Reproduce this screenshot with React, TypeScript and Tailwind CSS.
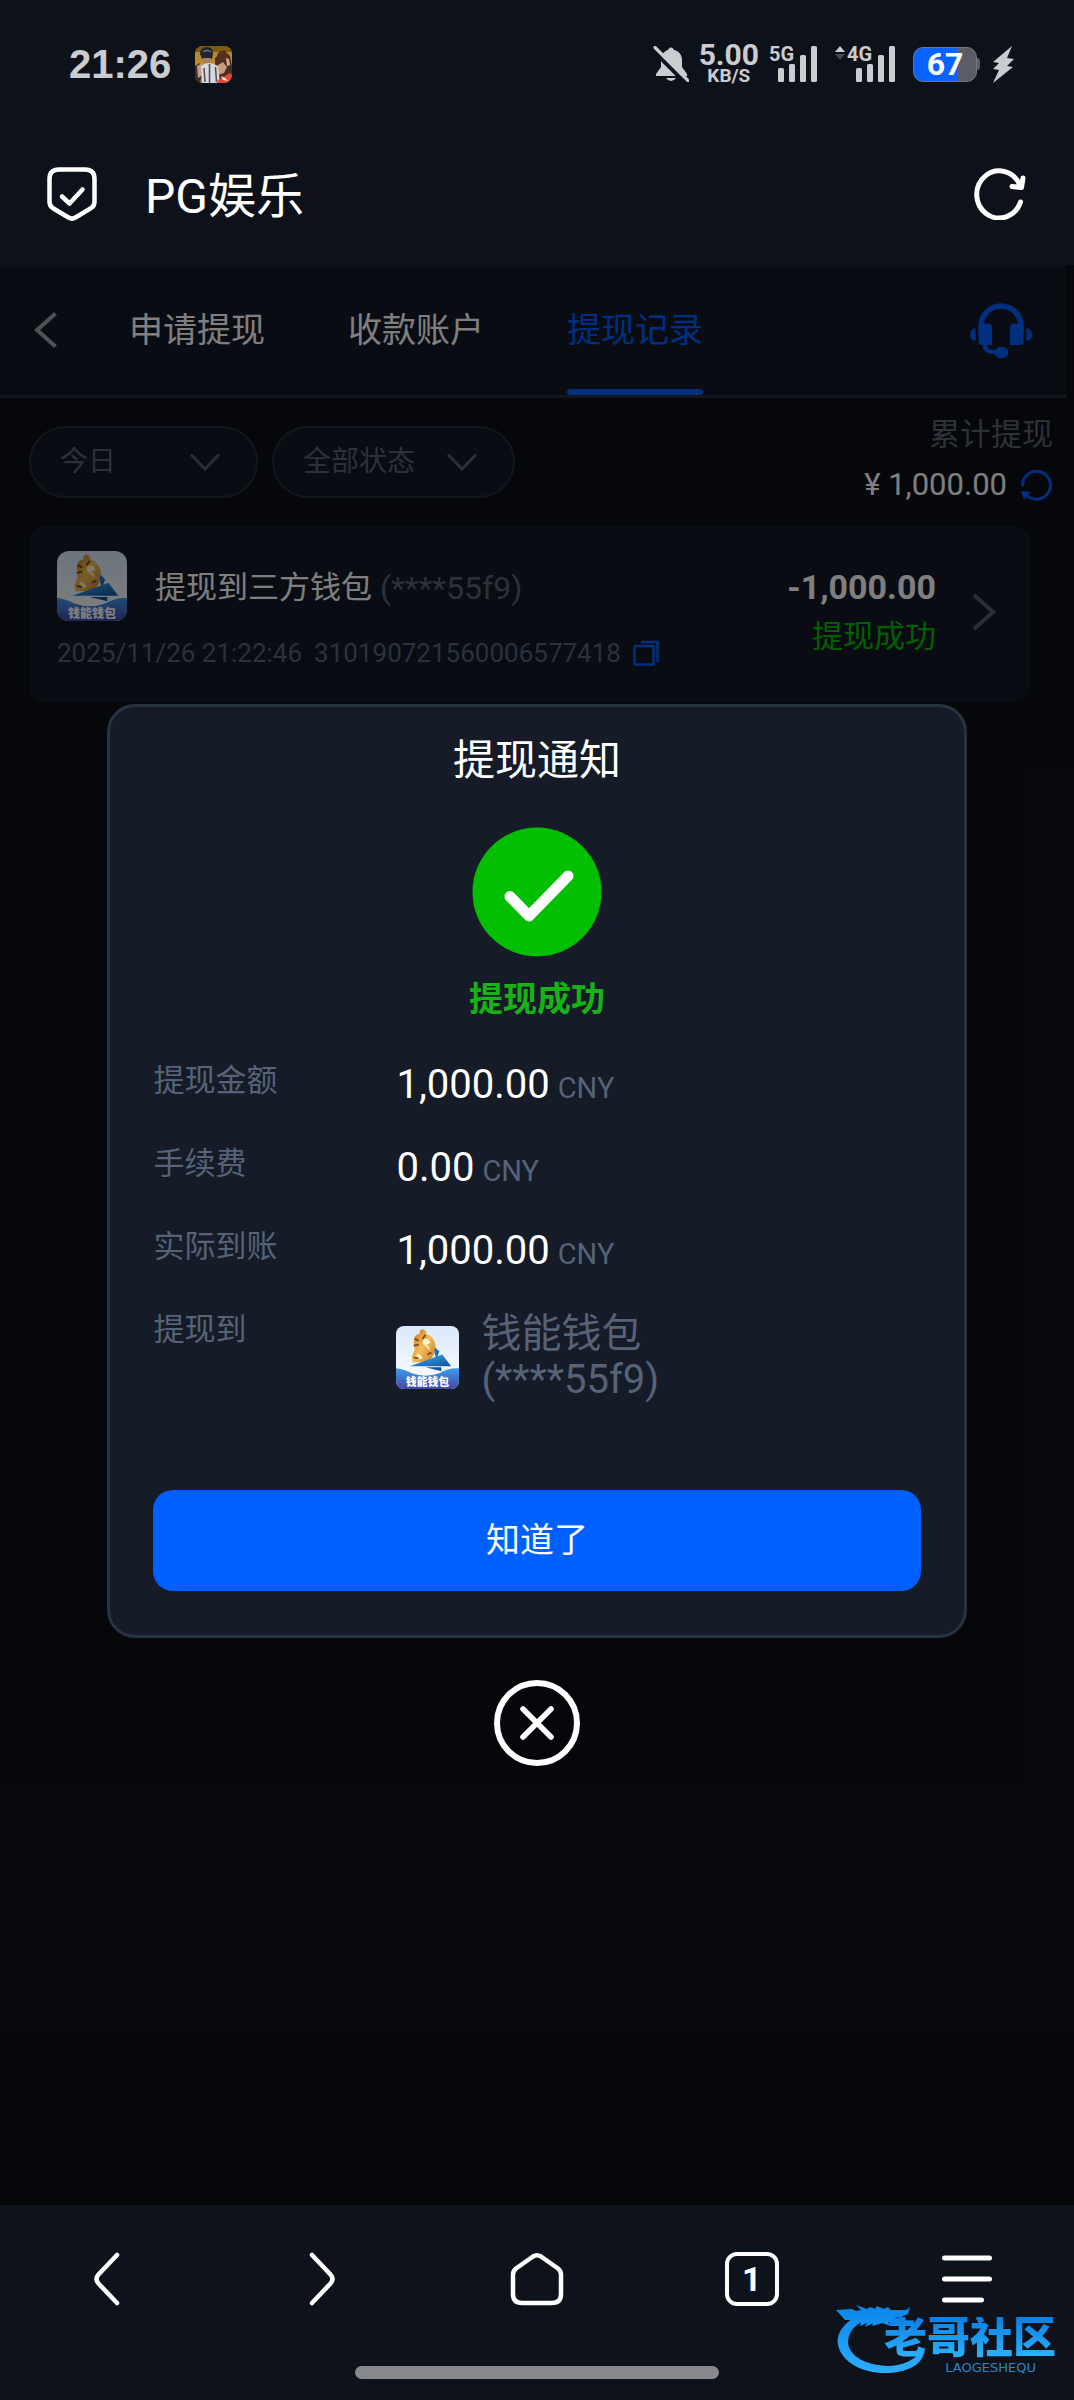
import React from "react";

const detailRows = [
  { label: "提现金额", value: "1,000.00", unit: "CNY" },
  { label: "手续费", value: "0.00", unit: "CNY" },
  { label: "实际到账", value: "1,000.00", unit: "CNY" },
];

function GameIcon() {
  return (
    <svg viewBox="0 0 37 37" className="size-[37px] rounded-lg" aria-hidden="true">
      <rect width="37" height="37" fill="#b98a2c" />
      <path d="M0 0h37v6H0z" fill="#7d5a12" />
      <path d="M20 12l9-8 6 6 2 10v17H20z" fill="#4a2f22" />
      <circle cx="27" cy="10" r="5" fill="#5b2f1e" />
      <path d="M23 19l5-3 4 5-3 6-6 2z" fill="#c99b7c" />
      <path d="M31 12l3 1 1 6-3 1z" fill="#d5ae8e" />
      <path d="M0 20l5-3 3 8-3 12H0z" fill="#3a2c28" />
      <path d="M2 20l5-3 1 12-5 3z" fill="#c99d84" />
      <path d="M6 20q7-6 17 0l2 17H7z" fill="#d6d8db" />
      <path d="M14.500 18v19M9 22l1 14M20.500 21l1 15" stroke="#4b4d52" strokeWidth="1.500" />
      <path d="M5 8q0-7 7-7 6 0 6 7l-1 5H7z" fill="#20242c" />
      <path d="M8 6q4-3 8 0" stroke="#6d7684" strokeWidth="1.500" fill="none" />
      <path d="M8 12h8l-1 5H9z" fill="#a87d62" />
      <path d="M23 34l12-7 2 2v8H22z" fill="#e5483b" />
      <path d="M26 30l4 2 3 3-5-1z" fill="#ffe9e4" />
    </svg>
  );
}

function MutedBell() {
  return (
    <svg viewBox="0 0 36 36" className="size-9" aria-hidden="true">
      <path
        d="M18 1.500c1.500 0 2.500 1 2.600 2.200C26 5 29 9 29 14v7l5 7v2H3v-2l5-7v-7c0-5 3-9 7.400-10.300C15.600 2.500 16.500 1.500 18 1.500z"
        fill="#cbccd0"
      />
      <path d="M13 32h10q-2 3-5 3t-5-3z" fill="#cbccd0" />
      <path d="M0 4.500l33 33" stroke="#0d1119" strokeWidth="4" />
      <path d="M2 1.500l33 33" stroke="#cbccd0" strokeWidth="3.200" strokeLinecap="round" />
    </svg>
  );
}

function SignalBars({ label, arrows = false }: { label: string; arrows?: boolean }) {
  return (
    <div className="relative h-9 w-12">
      <span className="absolute left-0 top-0 text-[20px] font-bold leading-4">{label}</span>
      {arrows && (
        <svg viewBox="0 0 10 14" className="absolute -left-3 top-0 h-3.5 w-2.5" aria-hidden="true">
          <path d="M5 0l5 6H0z" fill="#cbccd0" />
          <path d="M5 14l5-6H0z" fill="#44474e" />
        </svg>
      )}
      <svg viewBox="0 0 48 36" className="absolute inset-0 size-full" aria-hidden="true">
        <g fill="#cbccd0">
          <rect x="9" y="22" width="6" height="14" rx="1.500" />
          <rect x="20" y="18" width="6" height="18" rx="1.500" />
          <rect x="31" y="9" width="6" height="27" rx="1.500" />
          <rect x="42" y="0" width="6" height="36" rx="1.500" />
        </g>
      </svg>
    </div>
  );
}

function StatusBar() {
  return (
    <div className="flex h-[128px] items-center justify-between pl-[69px] pr-[60px] text-[#cbccd0]">
      <div className="flex items-center gap-6">
        <span className="font-['Liberation_Sans',sans-serif] text-[40px] font-bold leading-none">21:26</span>
        <GameIcon />
      </div>
      <div className="flex items-center">
        <MutedBell />
        <div className="ml-2.5 mr-2.5 flex flex-col items-center font-bold">
          <span className="text-[30px] leading-6">5.00</span>
          <span className="text-[19px] leading-[18px]">KB/S</span>
        </div>
        <SignalBars label="5G" />
        <div className="ml-[30px]">
          <SignalBars label="4G" arrows />
        </div>
        <div className="ml-[18px] flex items-center">
          <div className="flex h-[35px] w-16 items-center justify-center rounded-[10px] border border-[#74767c] bg-linear-to-r from-[#0a62ff] from-70% to-[#5b5d64] to-70% text-[32px] font-bold leading-none text-white">
            67
          </div>
          <div className="h-3 w-[3px] rounded-r-sm bg-[#5b5d64]" />
        </div>
        <svg viewBox="0 0 22 37" className="ml-3 h-[37px] w-[22px]" aria-hidden="true">
          <path d="M20 0L1 16l6 1-6 6 6 1L1 37l20-16-6-1 7-7-7-1z" fill="#cbccd0" />
        </svg>
      </div>
    </div>
  );
}

function TitleBar() {
  return (
    <header className="flex h-[137px] items-center justify-between pb-1.5 pl-[47px] pr-[48px]">
      <div className="flex items-center gap-12">
        <svg viewBox="0 0 50 54" className="h-[54px] w-[50px]" fill="none" stroke="#fff" strokeLinecap="round" strokeLinejoin="round" aria-hidden="true">
          <path d="M12 2.500h26q9.500 0 9.500 9.500v23q0 4-3.500 6.200L28.500 50.500q-3.500 2.200-7 0L6 41.200Q2.500 39 2.500 35V12q0-9.500 9.500-9.500z" strokeWidth="4.500" />
          <path d="M15 29.500l7.500 7L35.500 22.500" strokeWidth="4.500" />
        </svg>
        <h1 className="pt-1.5 text-[48px] leading-[64px] text-white">PG娱乐</h1>
      </div>
      <button type="button" aria-label="刷新">
        <svg viewBox="0 0 52 52" className="size-[52px]" fill="none" stroke="#fff" strokeWidth="5" strokeLinecap="round" strokeLinejoin="round">
          <path d="M46.500 34A22.500 23.500 0 1 1 46 17.500" />
          <path d="M49 10l-1.500 9.500L38 18.500" />
        </svg>
      </button>
    </header>
  );
}

function Headset() {
  return (
    <svg viewBox="0 0 62 56" className="h-14 w-[62px]" aria-hidden="true">
      <path d="M11 30v-6a20 20 0 0 1 40 0v6" fill="none" stroke="#005fff" strokeWidth="5.500" />
      <path d="M8.500 25q3-3.500 7-3.500h3q3.500 0 3.500 3.500v18H12q-3.500 0-3.500-3.500zM53.500 25q-3-3.500-7-3.500h-3q-3.500 0-3.500 3.500v18h10q3.500 0 3.500-3.500z" fill="#005fff" />
      <path d="M5.500 26v13Q0 38 0 32.500T5.500 26zM56.500 26v13q5.500-1 5.500-6.500T56.500 26z" fill="#005fff" />
      <path d="M14 42q1 8 10 8h4" fill="none" stroke="#005fff" strokeWidth="4" />
      <rect x="25" y="45" width="13" height="11" rx="5" fill="#005fff" />
    </svg>
  );
}

function WalletLogo({ className, id }: { className: string; id: string }) {
  return (
    <svg viewBox="0 0 64 64" className={className} role="img" aria-label="钱能钱包">
      <defs>
        <linearGradient id={`${id}-sky`} x1="0" y1="0" x2="0" y2="1">
          <stop offset="0" stopColor="#dbe9fb" />
          <stop offset="1" stopColor="#fdfeff" />
        </linearGradient>
        <linearGradient id={`${id}-sea`} x1="0" y1="0" x2="0" y2="1">
          <stop offset="0" stopColor="#3f9bea" />
          <stop offset="1" stopColor="#4347a8" />
        </linearGradient>
        <linearGradient id={`${id}-gold`} x1="0" y1="0" x2="1" y2="1">
          <stop offset="0" stopColor="#c0701c" />
          <stop offset="0.500" stopColor="#f2bd58" />
          <stop offset="1" stopColor="#c97a22" />
        </linearGradient>
        <linearGradient id={`${id}-wing`} x1="0" y1="0" x2="1" y2="1">
          <stop offset="0" stopColor="#39b2e6" />
          <stop offset="1" stopColor="#1450a4" />
        </linearGradient>
      </defs>
      <rect width="64" height="64" fill={`url(#${id}-sky)`} />
      <path d="M0 43q9 1 16 5 14 5 28 0 10-6 20-5v21H0z" fill={`url(#${id}-sea)`} />
      <path d="M37 19l7 7-3 8z" fill="#1b6fc0" />
      <path
        d="M24 5l3-2 3 2 1 3q8 3 9 11l-1 8q-1 6-8 9l-14 1-1-6 3-7-1-8q0-8 6-8z"
        fill={`url(#${id}-gold)`}
      />
      <path d="M29 13q5 0 6 4l-4 2q4 2 3 6-3-5-6-6-2-3 1-6zM21 28q5 1 6 5l-5 1z" fill="#fff2cf" />
      <path d="M19 13l4 2M18 20l5-1M18 32l5 1M30 9l-3 4M36 27l-4 2" stroke="#7f4411" strokeWidth="1.800" />
      <path d="M14 41l33-12 9 12z" fill={`url(#${id}-wing)`} />
      <path d="M30 42h16v4z" fill="#1450a4" />
      <text
        x="32"
        y="61"
        textAnchor="middle"
        fontSize="11"
        fontWeight="900"
        fill="#fff"
        fontFamily="'Noto Sans CJK SC', sans-serif"
      >
        钱能钱包
      </text>
    </svg>
  );
}

function FilterSelect({ label, option, className }: { label: string; option: string; className: string }) {
  return (
    <div className="relative">
      <select
        aria-label={label}
        className={`h-[72px] appearance-none rounded-full border-2 border-[#272c3a] bg-[#131924] pl-[29px] pr-16 text-[28px] leading-10 text-[#556277] ${className}`}
      >
        <option>{option}</option>
      </select>
      <svg viewBox="0 0 30 18" className="pointer-events-none absolute right-[38px] top-[27px] h-[18px] w-[30px]" fill="none" stroke="#545c6c" strokeWidth="3" aria-hidden="true">
        <path d="M1 1.500l14 14.500L29 1.500" />
      </svg>
    </div>
  );
}

function RecordsPage() {
  return (
    <div>
      <nav className="mr-2 flex h-[133px] items-stretch justify-between border-b-[3px] border-[#252c38] bg-[#131925] pl-[34px] pr-[34px]">
        <div className="flex">
          <button type="button" aria-label="返回" className="mr-[72px]">
            <svg viewBox="0 0 23 36" className="h-9 w-[23px]" fill="none" stroke="#a0a3aa" strokeWidth="4">
              <path d="M21.500 1.500L3 18l18.500 16.500" />
            </svg>
          </button>
          <div className="flex gap-[83px] text-[34px] text-white">
            <button type="button">申请提现</button>
            <button type="button">收款账户</button>
            <button type="button" aria-current="page" className="relative text-[#005fff]">
              提现记录
              <span className="absolute inset-x-0 bottom-0 h-1.5 rounded-sm bg-[#005fff]" />
            </button>
          </div>
        </div>
        <button type="button" aria-label="客服">
          <Headset />
        </button>
      </nav>

      <div className="flex items-start justify-between pl-[29px] pr-[21px] pt-3">
        <div className="flex gap-3.5 pt-4">
          <FilterSelect label="日期" option="今日" className="w-[229px]" />
          <FilterSelect label="状态" option="全部状态" className="w-[243px]" />
        </div>
        <div className="text-right text-[31px] leading-[50px]">
          <p className="text-[#596172]">累计提现</p>
          <p className="flex items-center gap-3 text-white">
            <span>¥ 1,000.00</span>
            <button type="button" aria-label="刷新累计">
              <svg viewBox="0 0 34 34" className="size-[34px]" fill="none" stroke="#005fff" strokeWidth="3">
                <path d="M3.500 18A14 14 0 1 1 8 27.500" />
                <path d="M2 23l10 1-7 8z" fill="#005fff" stroke="none" />
              </svg>
            </button>
          </p>
        </div>
      </div>

      <article className="ml-[29px] mr-11 mt-4 flex h-[176px] items-center justify-between rounded-2xl bg-[#131925] pl-7 pr-[34px]">
        <div className="pb-1">
          <div className="flex items-center text-[31px] leading-[48px]">
            <WalletLogo className="mr-7 size-[70px] rounded-xl" id="record" />
            <span className="pt-1 text-white">提现到三方钱包</span>
            <span className="ml-2 pt-1 text-[32px] text-[#556277]">(****55f9)</span>
          </div>
          <div className="mt-3 flex items-center text-[26px] leading-10 text-[#556277]">
            <time>2025/11/26 21:22:46</time>
            <span className="ml-3">310190721560006577418</span>
            <button type="button" aria-label="复制订单号" className="ml-3">
              <svg viewBox="0 0 26 26" className="size-[26px]" fill="none" stroke="#005fff" strokeWidth="2.500">
                <rect x="1.500" y="6" width="19" height="18.500" rx="1" />
                <path d="M8 2h16.500v20" />
              </svg>
            </button>
          </div>
        </div>
        <div className="flex items-center pb-1">
          <div className="text-right leading-[50px]">
            <p className="text-[34px] font-bold text-white">-1,000.00</p>
            <p className="text-[31px] text-[#04be02]">提现成功</p>
          </div>
          <svg viewBox="0 0 24 38" className="ml-9 h-[38px] w-6" fill="none" stroke="#545c6c" strokeWidth="4" aria-hidden="true">
            <path d="M2 2l19 17L2 36" />
          </svg>
        </div>
      </article>
    </div>
  );
}

function NoticeDialog() {
  return (
    <div className="absolute inset-0 flex flex-col items-center justify-center bg-black/50">
      <section
        role="dialog"
        aria-labelledby="notice-title"
        className="w-4/5 rounded-[28px] border-[3px] border-[#283340] bg-[#151c27] px-[43px] pb-11 pt-6"
      >
        <h2 id="notice-title" className="text-center text-[42px] leading-[60px] text-white">
          提现通知
        </h2>
        <svg viewBox="0 0 130 130" className="mx-auto mt-9 size-[130px]" aria-hidden="true">
          <circle cx="65" cy="65" r="64.500" fill="#04be02" />
          <path d="M38 69.500l19 19.500L96 49" fill="none" stroke="#fff" strokeWidth="11" strokeLinecap="round" strokeLinejoin="round" />
        </svg>
        <p className="mt-[18px] text-center text-[34px] font-bold leading-[48px] text-[#17b218]">提现成功</p>
        <dl className="mt-[35px] flex flex-col gap-[37px] text-[31px] leading-[46px] text-[#556277]">
          {detailRows.map((row) => (
            <div key={row.label} className="flex h-[46px]">
              <dt className="w-[243px]">{row.label}</dt>
              <dd className="pt-1">
                <span className="text-[40px] text-white">{row.value}</span>
                <span className="ml-2 text-[29px]">{row.unit}</span>
              </dd>
            </div>
          ))}
          <div className="flex">
            <dt className="w-[243px]">提现到</dt>
            <dd className="flex items-center gap-[22px] pt-1 text-[40px]">
              <WalletLogo className="size-[63px] rounded-lg" id="notice" />
              <span>
                钱能钱包
                <br />
                (****55f9)
              </span>
            </dd>
          </div>
        </dl>
        <button
          type="button"
          className="mt-[87px] h-[101px] w-full rounded-[20px] bg-[#005fff] text-[34px] text-white"
        >
          知道了
        </button>
      </section>
      <button type="button" aria-label="关闭" className="mt-[42px]">
        <svg viewBox="0 0 86 86" className="size-[86px]" fill="none" stroke="#fff" strokeLinecap="round">
          <circle cx="43" cy="43" r="40" strokeWidth="6" />
          <path d="M29 29l28 28M57 29L29 57" strokeWidth="5.500" />
        </svg>
      </button>
    </div>
  );
}

function Watermark() {
  return (
    <div className="absolute right-3.5 top-[96px] h-[74px] w-[224px]">
      <svg viewBox="0 0 224 74" className="absolute inset-0 size-full" aria-hidden="true">
        <defs>
          <linearGradient id="dragon" x1="0" y1="0" x2="0" y2="74" gradientUnits="userSpaceOnUse">
            <stop offset="0" stopColor="#0a82e8" />
            <stop offset="1" stopColor="#2cb0ff" />
          </linearGradient>
        </defs>
        <g fill="url(#dragon)">
          <path d="M30 12C8 19 0 32 2 44c4 18 26 29 50 28 22-1 37-10 37-26-9 13-23 19-37 19-22-1-38-9-40-23 0-12 8-21 26-26z" />
          <path d="M0 9l16-1 4 2 5-1-5-5 11 4 3-2 5 2 2-3 7 3 4-2 3 3 15 0 4-3-2 7-7 3-7 1 12 1-2 4-9 0-7-1 3 4-9-3-6 2-4 1 1-3-8 4 2-4-7 3 1-4-8 2 1-4-9 0z" />
        </g>
      </svg>
      <span className="absolute right-1 top-4 bg-linear-to-b from-[#0a7fe2] to-[#2eb3ff] bg-clip-text text-[43px] font-black leading-[42px] text-transparent">
        老哥社区
      </span>
      <span className="absolute right-6 top-[60px] font-['DejaVu_Sans',sans-serif] text-[13px] leading-none text-[#2a86c4]">
        LAOGESHEQU
      </span>
    </div>
  );
}

function BrowserBar() {
  const icon = "size-[54px]";
  return (
    <footer className="relative flex h-[195px] flex-col bg-[#0e121a]">
      <div className="grid h-[148px] grid-cols-5 place-items-center">
        <button type="button" aria-label="后退">
          <svg viewBox="0 0 54 54" className={icon} fill="none" stroke="#fff" strokeWidth="4.500" strokeLinecap="round">
            <path d="M37 3L18.500 22.500q-4 4.500 0 9L37 51" />
          </svg>
        </button>
        <button type="button" aria-label="前进">
          <svg viewBox="0 0 54 54" className={icon} fill="none" stroke="#fff" strokeWidth="4.500" strokeLinecap="round">
            <path d="M17 3l18.500 19.500q4 4.500 0 9L17 51" />
          </svg>
        </button>
        <button type="button" aria-label="主页">
          <svg viewBox="0 0 54 54" className={icon} fill="none" stroke="#fff" strokeWidth="4.500" strokeLinejoin="round">
            <path d="M23 4.500q4-2.500 8 0l17 12q3 2.500 3 6V42q0 9-9 9H12q-9 0-9-9V22.500q0-3.500 3-6z" />
          </svg>
        </button>
        <button
          type="button"
          aria-label="标签页"
          className="flex size-[54px] items-center justify-center rounded-xl border-4 border-white text-[34px] font-bold leading-none text-white"
        >
          1
        </button>
        <button type="button" aria-label="菜单">
          <svg viewBox="0 0 54 54" className={icon} fill="none" stroke="#fff" strokeWidth="5" strokeLinecap="round">
            <path d="M4.500 6h45M4.500 27h45M4.500 48h37" />
          </svg>
        </button>
      </div>
      <div className="mx-auto mt-[13px] h-[13px] w-[364px] rounded-full bg-[#88898d]" />
      <Watermark />
    </footer>
  );
}

export default function App() {
  return (
    <div className="flex min-h-screen flex-col bg-[#0d1119] font-['Roboto','Noto_Sans_CJK_SC',sans-serif]">
      <StatusBar />
      <TitleBar />
      <main className="relative flex-1 bg-[#0c0f15]">
        <RecordsPage />
        <NoticeDialog />
      </main>
      <BrowserBar />
    </div>
  );
}
